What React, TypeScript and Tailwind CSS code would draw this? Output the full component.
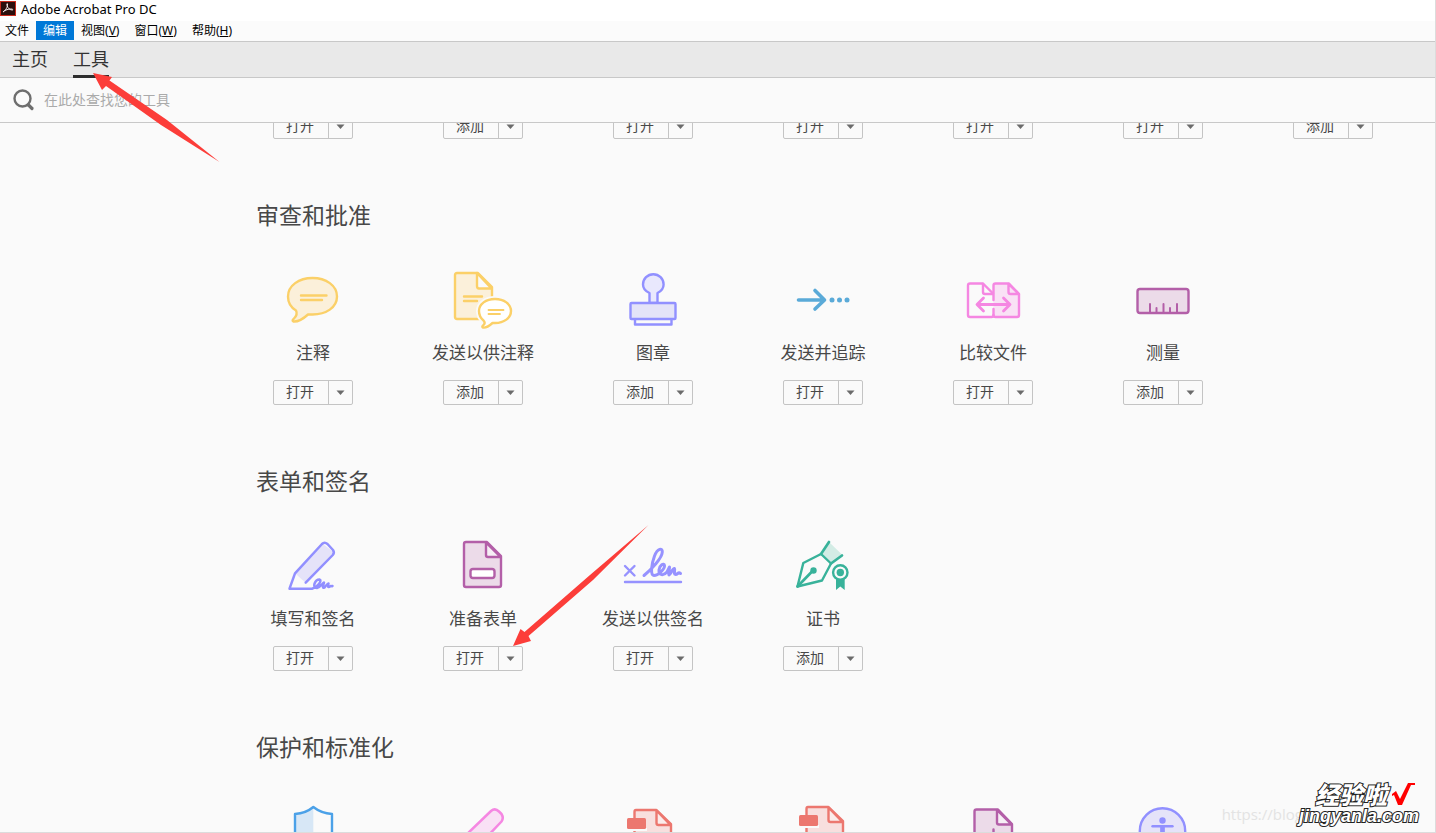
import React from 'react';

type Tool = {
  icon?: React.ReactNode;
  label?: string;
  action?: string;
};

type Section = {
  title: string;
  tools: Tool[];
};

const Icon: React.FC<{ children: React.ReactNode }> = ({ children }) => (
  <svg className="w-16 h-16" viewBox="0 0 64 64" fill="none" strokeWidth="2.4" strokeLinecap="round" strokeLinejoin="round" aria-hidden="true">
    {children}
  </svg>
);

const CommentIcon = () => (
  <Icon>
    <path d="M31.5 10C45 10 56 17.5 56 28.5S45 46.5 31.5 46.5H27C22 51 17.5 54 12.5 53.5C11 53 11.5 52 13 50.5C15.5 48 16.5 45.5 15 42.5C10 39.5 7 35 7 28.5C7 17.5 18 10 31.5 10Z" stroke="#fbd068" fill="#fbf0da" />
    <path d="M20 27.5H45.5M20 32H41" stroke="#fbd068" />
  </Icon>
);

const BUBBLE = 'M44 31C53 31 60 36 60 43S53 55 44 55H41.5C37 59 34 60 32 59.5C30.5 59 32 57.5 33 56.5C34 55 34 54 32.5 52.5C29.5 50 28 47 28 43C28 36 35 31 44 31Z';

const SendCommentIcon = () => (
  <Icon>
    <path d="M6 5H27L41 19V51H6Q4 51 4 49V7Q4 5 6 5Z" stroke="#fbd068" fill="#fbf0da" />
    <path d="M26 5V18Q26 20.5 28 20.5H40.5Z" stroke="#fbd068" fill="#fafafa" />
    <path d="M13 28.5H31M13 33H26" stroke="#fbd068" />
    <path d={BUBBLE} stroke="#fafafa" strokeWidth="6" />
    <path d={BUBBLE} stroke="#fbd068" fill="#fff" />
    <path d="M37.5 42H52.5M37.5 46H49" stroke="#fbd068" strokeWidth="1.8" />
  </Icon>
);

const StampIcon = () => (
  <Icon>
    <path d="M28.5 35V25C24 23 22 20 22 16.5A10.3 10.3 0 0 1 42.6 16.5C42.6 20 40.5 23 36.5 25V35Z" stroke="#9190ff" fill="#e9e8fd" />
    <rect x="9.5" y="35" width="45" height="16" rx="1" stroke="#9190ff" fill="#e4e3f8" />
    <path d="M14 51.5V56.5H50.5V51.5" stroke="#9190ff" />
  </Icon>
);

const TrackIcon = () => (
  <Icon>
    <path d="M7.5 32H33M24 22.5L33.5 32L24 41" stroke="#5aaad8" strokeWidth="3.6" />
    <g fill="#5aaad8">
      <circle cx="41" cy="32" r="2.5" />
      <circle cx="48.5" cy="32" r="2.5" />
      <circle cx="56" cy="32" r="2.5" />
    </g>
  </Icon>
);

const CompareIcon = () => (
  <Icon>
    <path d="M32.5 22V49H56Q58 49 58 47V26L47.5 15.5H34.5Q32.5 15.5 32.5 17.5" fill="#f9e1f5" />
    <path d="M32.5 32V17.5Q32.5 15.5 34.5 15.5H48L58 26V47Q58 49 56 49H34.5Q32.5 49 32.5 47V41" stroke="#f587e2" />
    <path d="M32.5 47Q32.5 49 30.5 49H9Q7 49 7 47V17.5Q7 15.5 9 15.5H22L32 25.5" stroke="#f587e2" />
    <path d="M22 16V24Q22 26 24 26H32M47.5 16V24Q47.5 26 49.5 26H58Z" stroke="#f587e2" />
    <path d="M16.5 36.5H48.5M22.5 30L16 36.5L22.5 43M42.5 30L49 36.5L42.5 43" stroke="#f587e2" strokeWidth="2.8" />
  </Icon>
);

const MeasureIcon = () => (
  <Icon>
    <rect x="6.5" y="21" width="51" height="24" rx="2.5" stroke="#b35fa8" fill="#ecdbe9" />
    <path d="M19 36V44M25.5 40V44M32.5 36V44M39 40V44M46 36V44" stroke="#b35fa8" strokeWidth="2" />
  </Icon>
);

const FillSignIcon = () => (
  <Icon>
    <path d="M14 39.3L42 10L53 18.5L24.7 48.7Z" fill="#e5e3f9" />
    <path d="M24.7 48.7L51.8 21Q53.8 18.5 52 16L46.5 10Q43.5 7.5 41 10L14 39.3L8.5 54.7H31C37 53 41.5 46 38.5 45.5C34 45.5 30.5 54 36 54C39 53.5 41 50 43 48.5C42 51.5 41 55 43.5 53.5C45 52 46 50 47.5 49.5C46.5 52.5 47 54 49 52.5C50 51.5 50 52.5 51.5 52" stroke="#918fff" strokeWidth="2.5" />
  </Icon>
);

const FormIcon = () => (
  <Icon>
    <path d="M15 8H36L50 22V51Q50 53 48 53H15Q13 53 13 51V10Q13 8 15 8Z" stroke="#b35fa8" fill="#ecdbe9" />
    <path d="M35 8.5V21Q35 23 37 23H49.5Z" stroke="#b35fa8" fill="#f6eff5" />
    <rect x="19.5" y="35" width="24" height="9" rx="2.5" stroke="#b35fa8" fill="#fff" />
  </Icon>
);

const SendSignIcon = () => (
  <Icon>
    <path d="M4 32L13.5 41.5M13.5 32L4 41.5M4 48H60" stroke="#9692ff" />
    <path d="M23 41.5C31 35 41 24 41.3 18C41.5 13.5 36.5 14 33.5 22C30.5 30 29 41 33 41.5C37 41.5 44 35 43.5 31.5C43 28.5 38.5 31 38 36C37.5 41.5 42.5 42 46 38L48.5 33C48.5 36 47 40 48 41C50 40 51.5 34 53.5 34.5C54.5 35.5 52 40.5 54.5 40.5C57 40.5 57 37.5 59.5 39.5" stroke="#9692ff" strokeWidth="3" />
  </Icon>
);

const CertificateIcon = () => (
  <Icon>
    <path d="M38 8L30 20L40 29.5L51.5 21Z" fill="#d3ece5" />
    <path d="M6.5 52.5L12.3 29L30 20L40 29.5L31 46.5Z" stroke="#38b29a" />
    <path d="M38 8L30 20M51 21.5L40 29.5M6.5 52.5L22 36.5" stroke="#38b29a" strokeWidth="2.7" />
    <circle cx="22.5" cy="36.5" r="3.2" fill="#38b29a" />
    <path d="M45 45H53.7V56L49.3 52.5L45 56Z" fill="#38b29a" />
    <circle cx="49.3" cy="38.5" r="7.2" stroke="#38b29a" fill="#fafafa" />
    <circle cx="49.3" cy="38.5" r="3.7" fill="#38b29a" />
  </Icon>
);

const ShieldIcon = () => (
  <Icon>
    <path d="M32.3 7C27 11.5 21 13 14 14V36C14 46 24 54 32.3 58Z" fill="#d7e7f6" />
    <path d="M32.3 7C27 11.5 21 13.5 14 14V36C14 46 24 54 32.3 58C41 54 51 46 51 36V14C44 13.5 38 11.5 32.3 7Z" stroke="#4ba1e8" />
  </Icon>
);

const RedactIcon = () => (
  <Icon>
    <path d="M24.7 48.7L50.5 21.5Q53 18 50.5 14L48 11.5Q44 7.5 40 11L14 36L8.5 54.7Z" stroke="#f587e2" fill="#f9e1f5" strokeWidth="2.5" />
  </Icon>
);

const RedDocument = () => (
  <>
    <path d="M15 10H35.5L50 24V56H13.5V12Q13.5 10 15 10Z" stroke="#ec776f" fill="#f8dfde" />
    <path d="M35.5 10.5V23Q35.5 25 37.5 25H49.5Z" stroke="#ec776f" fill="#fbeceb" />
    <rect x="12" y="28" width="14" height="3" fill="#fafafa" />
    <rect x="6" y="18" width="19" height="11" rx="1.5" fill="#ec776f" />
  </>
);

const StandardsIcon = () => (
  <Icon>
    <RedDocument />
  </Icon>
);

const OptimizeIcon = () => (
  <Icon>
    <g transform="translate(2 -3)">
      <RedDocument />
    </g>
  </Icon>
);

const ProductionIcon = () => (
  <Icon>
    <path d="M15.5 9.5H37L51 24V56H13.5V11.5Q13.5 9.5 15.5 9.5Z" stroke="#b35fa8" fill="#ecdbe9" />
    <path d="M36 10V22.5Q36 24.5 38 24.5H50.5Z" stroke="#b35fa8" fill="#f6eff5" />
    <path d="M32.5 29.5V44M25 36.5H40" stroke="#b35fa8" />
  </Icon>
);

const AccessibilityIcon = () => (
  <Icon>
    <circle cx="31.5" cy="31" r="22.7" stroke="#9190ff" fill="#e5e3f9" />
    <circle cx="31.5" cy="20.5" r="3.2" fill="#9190ff" />
    <path d="M21.5 26.2H41.5" stroke="#9190ff" />
    <path d="M31.5 27V42" stroke="#9190ff" strokeWidth="4.7" strokeLinecap="butt" />
  </Icon>
);

const previousActions = ['打开', '添加', '打开', '打开', '打开', '打开', '添加'];

const sections: Section[] = [
  {
    title: '审查和批准',
    tools: [
      { icon: <CommentIcon />, label: '注释', action: '打开' },
      { icon: <SendCommentIcon />, label: '发送以供注释', action: '添加' },
      { icon: <StampIcon />, label: '图章', action: '添加' },
      { icon: <TrackIcon />, label: '发送并追踪', action: '打开' },
      { icon: <CompareIcon />, label: '比较文件', action: '打开' },
      { icon: <MeasureIcon />, label: '测量', action: '添加' },
    ],
  },
  {
    title: '表单和签名',
    tools: [
      { icon: <FillSignIcon />, label: '填写和签名', action: '打开' },
      { icon: <FormIcon />, label: '准备表单', action: '打开' },
      { icon: <SendSignIcon />, label: '发送以供签名', action: '打开' },
      { icon: <CertificateIcon />, label: '证书', action: '添加' },
    ],
  },
  {
    title: '保护和标准化',
    tools: [
      { icon: <ShieldIcon /> },
      { icon: <RedactIcon /> },
      { icon: <StandardsIcon /> },
      { icon: <OptimizeIcon /> },
      { icon: <ProductionIcon /> },
      { icon: <AccessibilityIcon /> },
    ],
  },
];

const menus = [
  { text: '视图', hotkey: 'V' },
  { text: '窗口', hotkey: 'W' },
  { text: '帮助', hotkey: 'H' },
];

const SplitButton: React.FC<{ action: string }> = ({ action }) => (
  <div className="flex w-20 h-[25px] rounded-xs border border-[#c4c4c4] text-sm text-[#484848]">
    <button type="button" className="flex-1 pr-0.5 pb-1 leading-5">{action}</button>
    <button type="button" aria-label="更多" className="w-6 flex items-center justify-center border-l border-[#c4c4c4]">
      <svg className="w-[9px] h-[5px]" viewBox="0 0 9 5" aria-hidden="true">
        <path d="M0.5 0.5H8.5L4.5 5Z" fill="#6b6b6b" />
      </svg>
    </button>
  </div>
);

const ToolTile: React.FC<{ tool: Tool }> = ({ tool }) => (
  <li className="w-[170px] flex flex-col items-center">
    {tool.icon}
    {tool.label && <span className="mt-2 mb-4 text-[17px] leading-6 text-[#484848]">{tool.label}</span>}
    {tool.action && <SplitButton action={tool.action} />}
  </li>
);

const Header = () => (
  <header className="shrink-0">
    <div className="h-[21px] flex items-start gap-[5px] bg-white">
      <svg className="w-4 h-4" viewBox="0 0 16 16" fill="none" aria-hidden="true">
        <rect x="0.5" y="1.5" width="15" height="14" fill="#2c0f0d" stroke="#c92a1c" />
        <path d="M3 12C5 11 8 7 7.5 4C7.2 3 6.5 4 7 5.5C8 8.5 10 10 12.5 10C13.5 9.8 12.5 8.8 10.5 9C7.5 9.2 4 10.5 3 12Z" stroke="#f3e9e8" />
      </svg>
      <span className="font-['Noto_Sans'] text-[13px] leading-[19px] text-black">Adobe Acrobat Pro DC</span>
    </div>
    <nav className="h-5 flex items-start bg-[#fbfbfb] font-['Noto_Sans','Noto_Sans_CJK_SC',sans-serif] text-xs leading-[19px] text-black">
      <button type="button" className="pl-[5px] pr-[7px]">文件</button>
      <button type="button" className="px-[7px] bg-[#0078d7] text-white">编辑</button>
      {menus.map((menu) => (
        <button key={menu.hotkey} type="button" className="pl-[7px] pr-2">
          {menu.text}(<span className="underline">{menu.hotkey}</span>)
        </button>
      ))}
    </nav>
    <div className="h-[37px] flex gap-[25px] pl-3 bg-[#e9e9e9] border-y border-[#c8c8c8] text-lg text-[#333]">
      <button type="button" className="h-9 pb-0.5 border-b-3 border-transparent">主页</button>
      <button type="button" className="h-9 pb-0.5 border-b-3 border-[#2d2d2d]">工具</button>
    </div>
    <div className="h-[45px] flex items-center gap-[9px] pl-3 border-b border-[#c8c8c8]">
      <svg className="w-[23px] h-6" viewBox="0 0 23 24" fill="none" stroke="#6e6e6e" aria-hidden="true">
        <circle cx="10.5" cy="10.5" r="8" strokeWidth="2.4" />
        <path d="M16.5 17L20 20.5" strokeWidth="3.2" strokeLinecap="round" />
      </svg>
      <input type="text" aria-label="在此处查找您的工具" placeholder="在此处查找您的工具" className="w-64 pb-0.5 bg-transparent text-sm placeholder:text-[#aaa] outline-none" />
    </div>
  </header>
);

const Watermark = () => (
  <div className="absolute right-4 bottom-1.5 flex items-end">
    <span className="font-['Open_Sans'] text-[15px] leading-6 text-[#e3e3e3]">https://blog</span>
    <div className="-ml-1 flex flex-col items-end text-white [paint-order:stroke_fill] [-webkit-text-stroke:2px_#222]">
      <div className="flex items-start gap-1 pr-1">
        <span className="text-2xl leading-6 font-black italic">经验啦</span>
        <svg className="w-6 h-6" viewBox="0 0 24 24" fill="none" aria-hidden="true">
          <path d="M1 12L5 9L9 17L17 1H24V3H20L11 23H7L3 13L1 14Z" fill="#f00" />
        </svg>
      </div>
      <span className="font-['Liberation_Sans'] text-lg leading-5 font-bold italic">jingyanla.com</span>
    </div>
  </div>
);

export default function App() {
  return (
    <div className="relative h-screen flex flex-col overflow-hidden bg-[#fafafa] border-r border-b border-[#dcdcdc] font-['Noto_Sans_CJK_SC',sans-serif]">
      <Header />

      <main className="flex-1 min-h-0 overflow-hidden">
        {/* Scrolled so that the first row is partly under the search bar */}
        <div className="-mt-[9px] pl-[228px]">
          <ul className="flex flex-wrap">
            {previousActions.map((action, i) => (
              <ToolTile key={i} tool={{ action }} />
            ))}
          </ul>

          {sections.map((section) => (
            <section key={section.title} className="pt-[61px]">
              <h2 className="mb-10 pl-7 text-[23px] leading-7 text-[#484848]">{section.title}</h2>
              <ul className="flex flex-wrap">
                {section.tools.map((tool, i) => (
                  <ToolTile key={i} tool={tool} />
                ))}
              </ul>
            </section>
          ))}
        </div>
      </main>

      {/* Pointers to the tab and to the form tool */}
      <svg className="absolute left-[93px] top-[72px] w-[127px] h-[91px] pointer-events-none" viewBox="0 0 127 91" aria-hidden="true">
        <path d="M0 1L19 5L16.5 8.5L74 48L126.500 90L68 53L13 14L9 18Z" fill="#fc3d39" />
      </svg>
      <svg className="absolute left-[513px] top-[525px] w-[136px] h-[122px] pointer-events-none" viewBox="0 0 136 122" aria-hidden="true">
        <path d="M0 121L7.5 104L11.5 107L77 50L135.5 0L80 55L15.5 111L18 116Z" fill="#fc3d39" />
      </svg>

      <Watermark />
    </div>
  );
}
